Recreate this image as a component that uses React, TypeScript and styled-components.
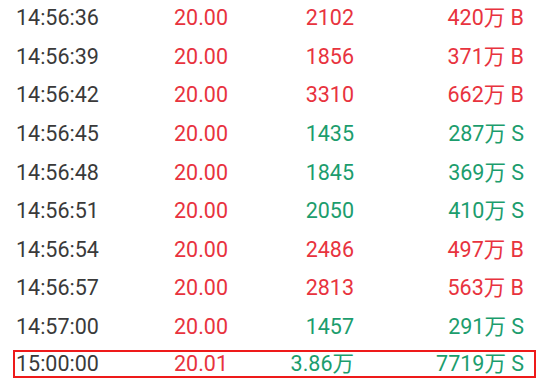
import styled, { createGlobalStyle } from 'styled-components';

const GlobalStyle = createGlobalStyle`
  html, body {
    margin: 0;
    padding: 0;
    background: #ffffff;
  }
  body {
    font-family: Roboto, "Noto Sans CJK SC", sans-serif;
    overflow: hidden;
  }
`;

const colors = {
  text: '#3a3a3a',
  up: '#e8333e',
  down: '#1c9d6d',
  frame: '#ee1a1a',
};

type Side = 'B' | 'S';

type Trade = {
  time: string;
  price: string;
  volume: string;
  amount: string;
  side: Side;
};

// 逐笔成交
const trades: Trade[] = [
  { time: '14:56:36', price: '20.00', volume: '2102', amount: '420万', side: 'B' },
  { time: '14:56:39', price: '20.00', volume: '1856', amount: '371万', side: 'B' },
  { time: '14:56:42', price: '20.00', volume: '3310', amount: '662万', side: 'B' },
  { time: '14:56:45', price: '20.00', volume: '1435', amount: '287万', side: 'S' },
  { time: '14:56:48', price: '20.00', volume: '1845', amount: '369万', side: 'S' },
  { time: '14:56:51', price: '20.00', volume: '2050', amount: '410万', side: 'S' },
  { time: '14:56:54', price: '20.00', volume: '2486', amount: '497万', side: 'B' },
  { time: '14:56:57', price: '20.00', volume: '2813', amount: '563万', side: 'B' },
  { time: '14:57:00', price: '20.00', volume: '1457', amount: '291万', side: 'S' },
];

const closing: Trade = {
  time: '15:00:00',
  price: '20.01',
  volume: '3.86万',
  amount: '7719万',
  side: 'S',
};

const List = styled.div`
  display: flex;
  flex-direction: column;
  margin-top: -1.3px;
`;

const Row = styled.div`
  display: grid;
  grid-template-columns: 158px 90px 90px 1fr;
  align-items: center;
  height: 38.6px;
  padding: 0 20px 0 16px;
  font-size: 21.5px;
  line-height: 1;
`;

const ClosingRow = styled(Row)`
  box-sizing: border-box;
  height: 28px;
  margin: 3.7px 8px 0 13px;
  padding: 0 10px 0 1px;
  border: 2px solid ${colors.frame};
`;

const Time = styled.span`
  color: ${colors.text};
`;

const Cell = styled.span<{ $side: Side; $right?: boolean }>`
  color: ${p => (p.$side === 'B' ? colors.up : colors.down)};
  text-align: ${p => (p.$right ? 'right' : 'left')};
  white-space: nowrap;
`;

const Price = styled.span`
  color: ${colors.up};
`;

function TradeCells({ trade }: { trade: Trade }) {
  return (
    <>
      <Time>{trade.time}</Time>
      <Price>{trade.price}</Price>
      <Cell $side={trade.side} $right>
        {trade.volume}
      </Cell>
      <Cell $side={trade.side} $right>
        {trade.amount} {trade.side}
      </Cell>
    </>
  );
}

function App(): JSX.Element {
  return (
    <>
      <GlobalStyle />
      <List>
        {trades.map(t => (
          <Row key={t.time}>
            <TradeCells trade={t} />
          </Row>
        ))}
        <ClosingRow>
          <TradeCells trade={closing} />
        </ClosingRow>
      </List>
    </>
  );
}

export default App;
